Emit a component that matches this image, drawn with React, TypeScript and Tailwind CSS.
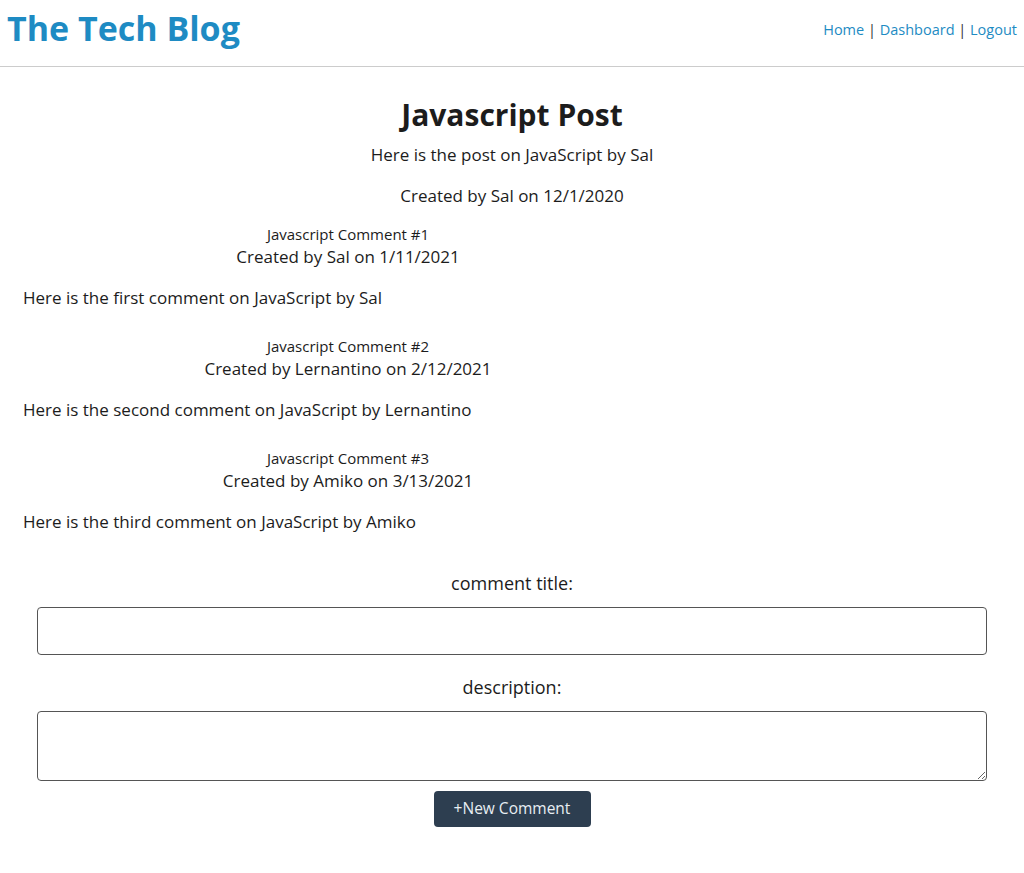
const COMMENTS = [
  {
    title: "Javascript Comment #1",
    author: "Sal",
    date: "1/11/2021",
    body: "Here is the first comment on JavaScript by Sal",
  },
  {
    title: "Javascript Comment #2",
    author: "Lernantino",
    date: "2/12/2021",
    body: "Here is the second comment on JavaScript by Lernantino",
  },
  {
    title: "Javascript Comment #3",
    author: "Amiko",
    date: "3/13/2021",
    body: "Here is the third comment on JavaScript by Amiko",
  },
];

export default function App() {
  return (
    <div className="min-h-[873px] bg-white text-[#1c1c1c] font-['Open_Sans',sans-serif]">
      <header className="flex items-center justify-between h-[67px] border-b border-[#cccccc] px-[7px]">
        <h1 className="text-[34px] font-bold text-[#1e8bc3] leading-none -mt-[10px]">
          The Tech Blog
        </h1>
        <nav className="text-[14.5px] text-[#333] -mt-[6px]">
          <a href="#" className="text-[#1e8bc3]">Home</a> |{" "}
          <a href="#" className="text-[#1e8bc3]">Dashboard</a> |{" "}
          <a href="#" className="text-[#1e8bc3]">Logout</a>
        </nav>
      </header>

      <main className="pt-[29px]">
        <section className="text-center">
          <h2 className="text-[30px] font-bold leading-[38px]">Javascript Post</h2>
          <p className="text-[17px] mt-[9px] leading-[24px]">Here is the post on JavaScript by Sal</p>
          <p className="text-[17px] mt-[17px] leading-[24px]">Created by Sal on 12/1/2020</p>
        </section>

        <section className="mt-[16px] pl-[23px] space-y-[26px]">
          {COMMENTS.map((c) => (
            <article key={c.title}>
              <div className="w-[650px] text-center">
                <h3 className="text-[15px] leading-[20px]">{c.title}</h3>
                <p className="text-[17px] leading-[24px] mt-[1px]">
                  Created by {c.author} on {c.date}
                </p>
              </div>
              <p className="text-[17px] leading-[24px] mt-[17px]">{c.body}</p>
            </article>
          ))}
        </section>

        <form className="mt-[37px] px-[37px] flex flex-col items-center">
          <label className="text-[18px] leading-[24px]">comment title:</label>
          <input
            type="text"
            className="mt-[12px] w-full h-[48px] border border-[#555] rounded-[4px] px-2"
          />
          <label className="mt-[20px] text-[18px] leading-[24px]">description:</label>
          <textarea className="mt-[12px] w-full h-[70px] border border-[#555] rounded-[4px] px-2 block" />
          <button
            type="button"
            className="mt-[10px] w-[157px] h-[36px] bg-[#2d3e50] text-[#e8eef3] text-[15.5px] rounded-[4px]"
          >
            +New Comment
          </button>
        </form>
      </main>
    </div>
  );
}
